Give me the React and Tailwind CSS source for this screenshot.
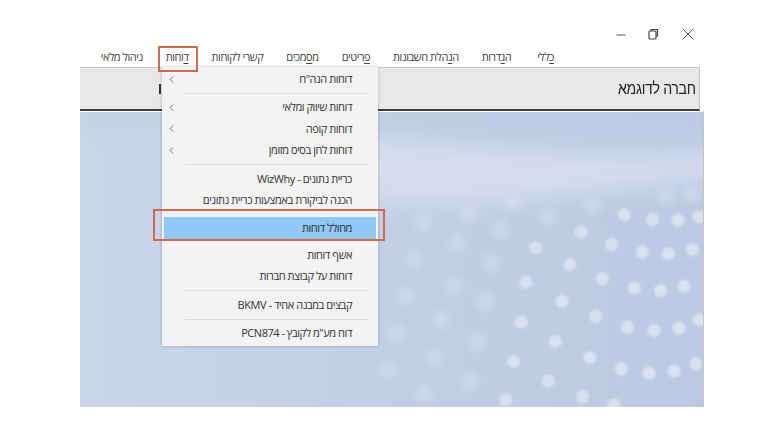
import { ChevronLeft, Minus, X } from 'lucide-react';

// Menu bar labels: [before, underlined letter, after]
const MENU_BAR = [
  ['', 'כ', 'ללי'],
  ['ה', 'ג', 'דרות'],
  ['ה', 'נ', 'הלת חשבונות'],
  ['', 'פ', 'ריטים'],
  ['מ', 'ס', 'מכים'],
  ['', '', 'קשרי לקוחות'],
  ['', 'ד', 'וחות'],
  ['', '', 'ניהול מלאי'],
];

// Sharp and faint dots of the wallpaper, in window-relative pixels
const SHARP_DOTS = [
  [735, 315], [820, 330], [897, 333], [960, 322], [605, 368], [697, 405], [790, 428], [868, 432], [940, 420],
  [572, 465], [670, 507], [765, 535], [845, 543], [915, 530], [548, 575], [650, 620], [745, 652], [825, 662],
  [900, 655], [960, 630], [528, 695], [632, 743], [727, 777], [810, 790], [885, 783], [950, 762], [507, 813],
  [610, 860], [705, 885], [440, 518], [470, 415], [425, 637], [403, 755], [380, 870],
];
const FAINT_DOTS = [
  [505, 325], [365, 360], [335, 460], [318, 575], [295, 697], [273, 813], [232, 400], [225, 530], [185, 630],
  [163, 745], [135, 855], [105, 450], [80, 560], [50, 670], [25, 780], [130, 340], [265, 310], [640, 290],
  [860, 260], [940, 255], [400, 280],
];
const px = (x) => 300 + x / 3;
const py = (y) => y / 3 - 3;

function Wallpaper() {
  return (
    <svg viewBox="0 0 624 294" className="block w-full h-full" preserveAspectRatio="none">
      <defs>
        <filter id="soft" x="-30%" y="-60%" width="160%" height="220%">
          <feGaussianBlur stdDeviation="11" />
        </filter>
        <filter id="dot" x="-50%" y="-50%" width="200%" height="200%">
          <feGaussianBlur stdDeviation="1.3" />
        </filter>
        <filter id="faint" x="-50%" y="-50%" width="200%" height="200%">
          <feGaussianBlur stdDeviation="3" />
        </filter>
        <linearGradient id="base" x1="0" x2="1" y1="0" y2="0">
          <stop offset="0" stopColor="#cbd5ea" />
          <stop offset="0.45" stopColor="#c3cfe6" />
          <stop offset="1" stopColor="#bcc9e2" />
        </linearGradient>
      </defs>
      <rect width="624" height="294" fill="url(#base)" />
      <path d="M0 0H624V30C540 42 440 30 330 14C200 0 90 6 0 14Z" fill="#bfcbe4" filter="url(#soft)" />
      <path d="M220 24C340 24 480 50 640 40V66C540 76 420 96 300 90C270 70 240 40 220 24Z" fill="#d5ddee" filter="url(#soft)" />
      <g fill="#d9e0f0" opacity="0.5" filter="url(#faint)">
        {FAINT_DOTS.map(([x, y]) => (
          <circle key={`${x}-${y}`} cx={px(x)} cy={py(y)} r="9" />
        ))}
      </g>
      <g fill="#d9e1f1" filter="url(#dot)">
        {SHARP_DOTS.map(([x, y]) => (
          <circle key={`${x}-${y}`} cx={px(x)} cy={py(y)} r="6.5" />
        ))}
      </g>
    </svg>
  );
}

function MenuItem({ label, arrow, active }) {
  return (
    <div
      className={
        'flex items-center justify-between pl-[4px] text-[11px] tracking-[-0.45px] text-[#333333] ' +
        (active ? 'h-[22px] mx-[2px] pr-[24px] bg-[#90c8f8]' : 'h-[21.4px] pr-[26px]')
      }
    >
      <span className="whitespace-nowrap">{label}</span>
      {arrow && <ChevronLeft size={11} strokeWidth={1.6} className="text-[#444444]" />}
    </div>
  );
}

function Separator() {
  return <div className="h-px bg-[#dcdcdc] ml-[23px] mr-[10px] my-[3px]" />;
}

function ReportsMenu() {
  return (
    <div
      dir="rtl"
      className="absolute left-[82px] top-0 w-[216px] h-[279px] bg-[#f3f3f3] pt-[1.5px] shadow-[0_0_3px_rgba(0,0,0,0.25)]"
    >
      <MenuItem label={'דוחות הנה"ח'} arrow />
      <Separator />
      <MenuItem label="דוחות שיווק ומלאי" arrow />
      <MenuItem label="דוחות קופה" arrow />
      <MenuItem label="דוחות לחן בסיס מזומן" arrow />
      <Separator />
      <MenuItem label="כריית נתונים - WizWhy" />
      <MenuItem label="הכנה לביקורת באמצעות כריית נתונים" />
      <div className="h-[6.1px]" />
      <MenuItem label="מחולל דוחות" active />
      <div className="h-[5.6px]" />
      <MenuItem label="אשף דוחות" />
      <MenuItem label="דוחות על קבוצת חברות" />
      <Separator />
      <MenuItem label="קבצים במבנה אחיד - BKMV" />
      <Separator />
      <MenuItem label={'דוח מע"מ לקובץ - PCN874'} />
    </div>
  );
}

export default function App() {
  return (
    <div className="relative w-[768px] h-[432px] bg-white overflow-hidden pl-[80px] pr-[64px] font-['Open_Sans','Liberation_Sans',sans-serif]">
      {/* window controls */}
      <div className="h-[47px] flex items-end justify-end gap-[17px] pr-[6px] pb-[3px] text-[#444444]">
        <Minus size={14} strokeWidth={1.6} className="mb-[2px]" />
        <svg width="16" height="16" viewBox="0 0 16 16" fill="none" stroke="currentColor" strokeWidth="1.2" className="mb-[2px]">
          <rect x="4" y="5" width="7" height="8" rx="1" />
          <path d="M6 5V3.5h6.5V10H11" />
        </svg>
        <X size={20} strokeWidth={1.1} />
      </div>

      {/* menu bar */}
      <div dir="rtl" className="h-[20px] flex items-center gap-[23px] pr-[150px] text-[11px] tracking-[-0.45px] text-[#444444]">
        {MENU_BAR.map(([before, key, after]) => (
          <span key={before + key + after} className="whitespace-nowrap first:ml-[3px]">
            {before}
            {key && <u className="underline underline-offset-2">{key}</u>}
            {after}
          </span>
        ))}
      </div>

      <div className="relative">
        {/* company strip */}
        <div
          dir="rtl"
          className="h-[44px] mr-[4px] bg-[#e8e8e8] border-t border-t-[#c8c8c8] border-r border-r-[#c4c4c4] border-b-2 border-b-[#3c3c3c] flex items-center justify-between pr-[3px] pl-[79px]"
        >
          <span className="inline-block origin-right scale-x-[0.885] text-[16px] tracking-[-0.4px] text-[#222222] font-['Liberation_Sans',sans-serif]">
            חברה לדוגמא
          </span>
          <span className="w-[2px] h-[10px] bg-[#333333]" />
        </div>
        <div className="h-[296px] pt-px border-r border-r-[#c4c4c4]">
          <Wallpaper />
        </div>
        <ReportsMenu />
        {/* highlight frames */}
        <div className="absolute left-[73px] top-[142px] w-[232px] h-[32px] border-2 border-[#cf6a50]" />
      </div>
      <div className="absolute left-[158px] top-[46px] w-[40px] h-[26px] border-2 border-[#cf6a50]" />
    </div>
  );
}
